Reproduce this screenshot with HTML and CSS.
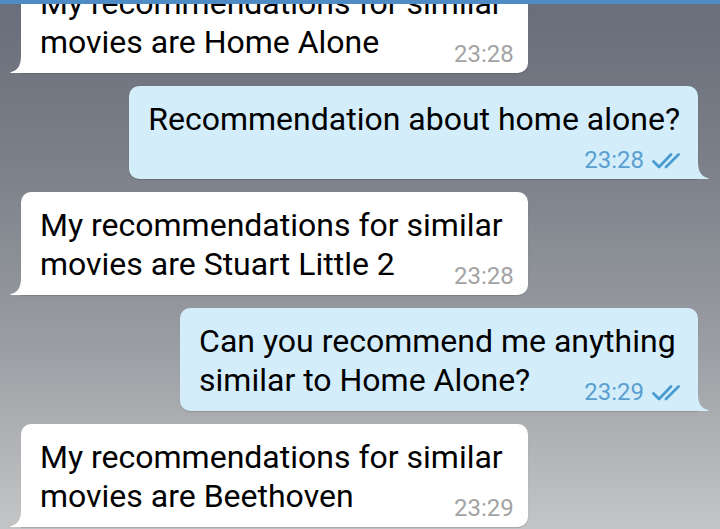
FILE: index.html
```html
<!DOCTYPE html>
<html lang="en">
<head>
<meta charset="utf-8">
<title>Chat</title>
<link rel="stylesheet" href="styles.css">
</head>
<body>
<div class="app">
  <div class="appbar"></div>
  <main class="chat">
    <p class="bubble in">My recommendations for similar<br>movies are Home Alone<span class="meta"><span class="time">23:28</span></span><svg class="tail" viewBox="0 0 12 17"><path d="M11 0 Q11 14 1 16 Q0 16.4 0.6 17 H12 V0 Z"/></svg></p>

    <p class="bubble out">Recommendation about home alone?<br><span class="meta below"><span class="time">23:28</span><svg class="checks" viewBox="0 0 30 16"><path d="M1.5 8.5 L7 14 L19 1.5"/><path d="M14 14 L26.5 1.5"/></svg></span><svg class="tail" viewBox="0 0 12 17"><path d="M11 0 Q11 14 1 16 Q0 16.4 0.6 17 H12 V0 Z"/></svg></p>

    <p class="bubble in">My recommendations for similar<br>movies are Stuart Little 2<span class="meta"><span class="time">23:28</span></span><svg class="tail" viewBox="0 0 12 17"><path d="M11 0 Q11 14 1 16 Q0 16.4 0.6 17 H12 V0 Z"/></svg></p>

    <p class="bubble out">Can you recommend me anything<br>similar to Home Alone?<span class="meta"><span class="time">23:29</span><svg class="checks" viewBox="0 0 30 16"><path d="M1.5 8.5 L7 14 L19 1.5"/><path d="M14 14 L26.5 1.5"/></svg></span><svg class="tail" viewBox="0 0 12 17"><path d="M11 0 Q11 14 1 16 Q0 16.4 0.6 17 H12 V0 Z"/></svg></p>

    <p class="bubble in">My recommendations for similar<br>movies are Beethoven<span class="meta"><span class="time">23:29</span></span><svg class="tail" viewBox="0 0 12 17"><path d="M11 0 Q11 14 1 16 Q0 16.4 0.6 17 H12 V0 Z"/></svg></p>
  </main>
</div>
</body>
</html>
```

FILE: styles.css
```css
html, body {
  margin: 0;
  height: 100%;
}

body {
  font-family: Roboto, "Noto Sans", sans-serif;
}

.app {
  height: 100vh;
  display: flex;
  flex-direction: column;
  background: linear-gradient(180deg, #686e7a 0%, #7a7f88 30%, #9a9da2 65%, #c4c5c6 100%);
}

.appbar {
  flex: none;
  height: 4px;
  background: #4f8cc5;
}

.chat {
  flex: 1;
  min-height: 0;
  overflow: hidden;
  display: flex;
  flex-direction: column;
  justify-content: flex-end;
  gap: 13px;
  padding: 0 22px 2px 21px;
}

.bubble {
  position: relative;
  flex: none;
  display: flow-root;
  width: max-content;
  margin: 0;
  padding: 14px 25px 5px 19px;
  font-size: 32px;
  line-height: 39px;
  color: #000;
  border-radius: 10px;
  box-shadow: 0 1px 1px rgba(0, 0, 0, 0.16);
}

.in {
  align-self: flex-start;
  background: #fff;
  border-bottom-left-radius: 0;
}

.out {
  align-self: flex-end;
  background: #d3edfb;
  border-bottom-right-radius: 0;
  padding-right: 18px;
}

.meta {
  float: right;
  display: flex;
  align-items: center;
  gap: 8px;
  margin: 18px -11px 0 54px;
  font-size: 24px;
  line-height: 27px;
  color: #a3a3a3;
}

.out .meta {
  margin-right: -2px;
  color: #5a9fcf;
}

.meta.below {
  margin-top: 8px;
}

.checks {
  width: 30px;
  height: 16px;
  fill: none;
  stroke: #4a9ad2;
  stroke-width: 2.8;
  stroke-linecap: round;
  stroke-linejoin: round;
}

.tail {
  position: absolute;
  bottom: 0;
  width: 12px;
  height: 17px;
}

.in .tail {
  left: -11px;
  fill: #fff;
}

.out .tail {
  right: -11px;
  transform: scaleX(-1);
  fill: #d3edfb;
}
```
